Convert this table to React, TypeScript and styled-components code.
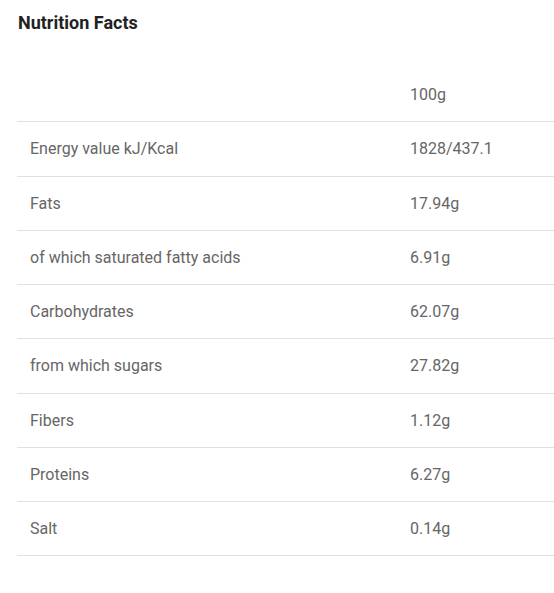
import React from "react";
import styled, { createGlobalStyle } from "styled-components";

const Global = createGlobalStyle`
  html, body { margin: 0; padding: 0; background: #fff; }
  body { font-family: Roboto, "Liberation Sans", Arial, sans-serif; }
`;

const Wrapper = styled.section`
  padding: 12px 0 0 17px;
  width: 554px;
  box-sizing: border-box;
`;

const Title = styled.h2`
  margin: 0 0 0 1px;
  font-size: 18px;
  line-height: 22px;
  font-weight: 700;
  color: #222;
`;

const Table = styled.table`
  margin-top: 34px;
  width: 100%;
  border-collapse: collapse;
  font-size: 16px;
  color: #666;
`;

const Row = styled.tr`
  border-bottom: 1px solid #e0e0e0;
`;

const Cell = styled.td<{ $value?: boolean }>`
  padding: 16px 12px 16px ${(p) => (p.$value ? "12px" : "13px")};
  line-height: 21.25px;
  text-align: left;
  font-weight: 400;
  width: ${(p) => (p.$value ? "auto" : "356px")};
  white-space: nowrap;
`;

const rows: [string, string][] = [
  ["Energy value kJ/Kcal", "1828/437.1"],
  ["Fats", "17.94g"],
  ["of which saturated fatty acids", "6.91g"],
  ["Carbohydrates", "62.07g"],
  ["from which sugars", "27.82g"],
  ["Fibers", "1.12g"],
  ["Proteins", "6.27g"],
  ["Salt", "0.14g"],
];

export default function App() {
  return (
    <>
      <Global />
      <Wrapper>
        <Title>Nutrition Facts</Title>
        <Table>
          <thead>
            <Row>
              <Cell as="th"></Cell>
              <Cell as="th" $value>100g</Cell>
            </Row>
          </thead>
          <tbody>
            {rows.map(([k, v]) => (
              <Row key={k}>
                <Cell>{k}</Cell>
                <Cell $value>{v}</Cell>
              </Row>
            ))}
          </tbody>
        </Table>
      </Wrapper>
    </>
  );
}
